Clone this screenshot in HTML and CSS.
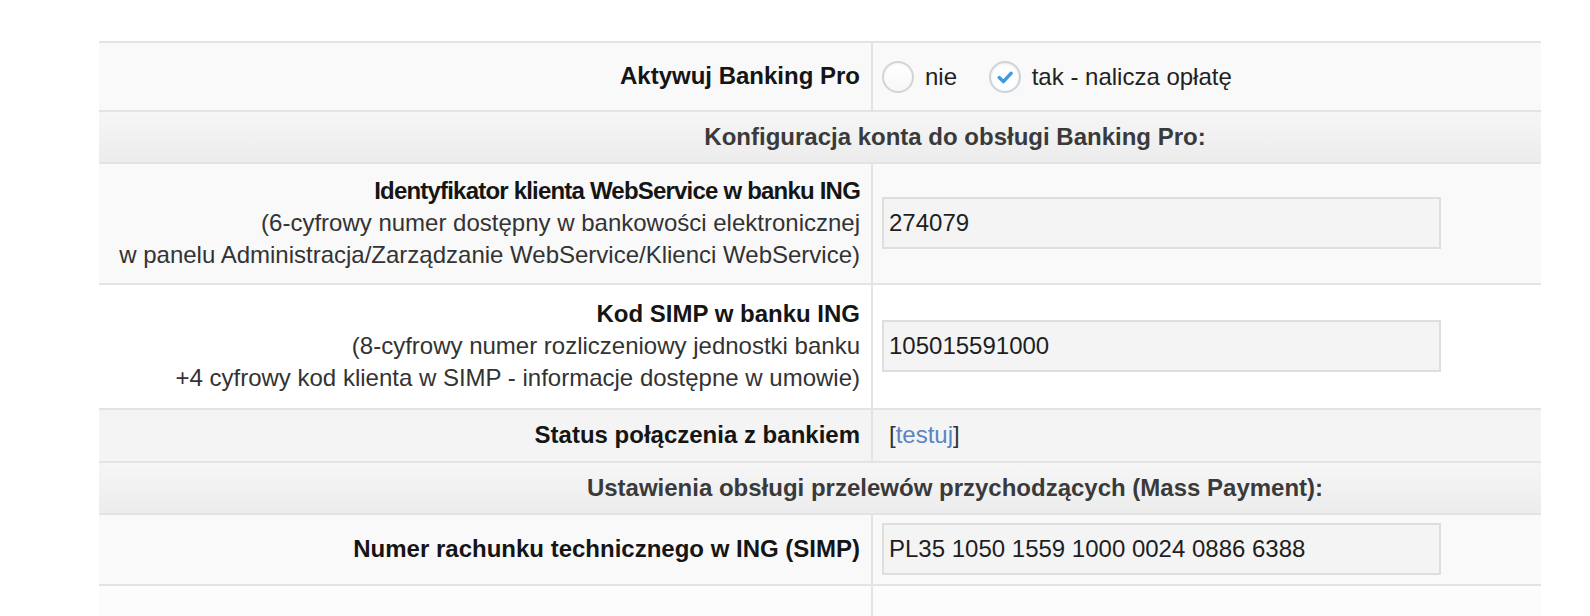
FILE: index.html
```html
<!DOCTYPE html>
<html>
	<head>
		<meta charset="utf-8">
		<link rel="stylesheet" href="styles.css">
	</head>
	<body>
		<div class="page">
			<table class="settings" border="0" cellspacing="0" cellpadding="0">
				<tr class="row-radio odd">
					<td class="label"><b>Aktywuj Banking Pro</b></td>
					<td class="value">
						<label class="choice first"><span class="radio"></span>nie</label>
						<label class="choice"><span class="radio checked"><svg width="28" height="28" viewBox="0 0 28 28"><path d="M8.2 14.6 L12.4 18.6 L20.2 10.2" fill="none" stroke="#3d9bd9" stroke-width="3.4" stroke-linecap="round" stroke-linejoin="round"/></svg></span>tak - nalicza opłatę</label>
					</td>
				</tr>
				<tr class="section">
					<td colspan="2">Konfiguracja konta do obsługi Banking Pro:</td>
				</tr>
				<tr class="row-ident odd">
					<td class="label">
						<b class="tight">Identyfikator klienta WebService w banku ING</b><br>
						(6-cyfrowy numer dostępny w bankowości elektronicznej<br>
						w panelu Administracja/Zarządzanie WebService/Klienci WebService)
					</td>
					<td class="value"><input type="text" class="input" value="274079"></td>
				</tr>
				<tr class="row-simp even">
					<td class="label">
						<b>Kod SIMP w banku ING</b><br>
						(8-cyfrowy numer rozliczeniowy jednostki banku<br>
						+4 cyfrowy kod klienta w SIMP - informacje dostępne w umowie)
					</td>
					<td class="value"><input type="text" class="input" value="105015591000"></td>
				</tr>
				<tr class="row-status hover">
					<td class="label"><b>Status połączenia z bankiem</b></td>
					<td class="value"><span class="test">[<a href="#">testuj</a>]</span></td>
				</tr>
				<tr class="section">
					<td colspan="2">Ustawienia obsługi przelewów przychodzących (Mass Payment):</td>
				</tr>
				<tr class="row-account odd">
					<td class="label"><b>Numer rachunku technicznego w ING (SIMP)</b></td>
					<td class="value"><input type="text" class="input" value="PL35 1050 1559 1000 0024 0886 6388"></td>
				</tr>
				<tr class="row-more even">
					<td class="label"></td>
					<td class="value"></td>
				</tr>
			</table>
		</div>
	</body>
</html>
```

FILE: styles.css
```css
body {
	margin: 0;
	background: #FFF;
	font-family: "Liberation Sans", Arial, sans-serif;
	font-size: 24px;
	line-height: 32px;
	color: #222;
	overflow: hidden;
}

.page {
	padding: 41px 0 0 99px;
}

.settings {
	width: 1442px;
	table-layout: fixed;
	border-collapse: separate;
	border-top: 2px solid #E3E3E3;
	font-size: 24px;
	line-height: 32px;
}

.settings td {
	box-sizing: border-box;
	border-bottom: 2px solid #E3E3E3;
	padding: 9px 9px 9px 9px;
	vertical-align: middle;
}

.settings td.label {
	width: 774px;
	text-align: right;
	padding-right: 11px;
	border-right: 2px solid #E3E3E3;
	color: #333;
}

.settings td.label b {
	color: #151515;
}

.settings td.label b.tight {
	letter-spacing: -0.8px;
}

.odd td {
	background: #F9F9F9;
}

.even td {
	background: #FFF;
}

.hover td {
	background: #F4F4F4;
}

.section td {
	background: linear-gradient(#F6F6F6, #ECECEC);
	text-align: center;
	font-weight: bold;
	color: #3A3A3A;
	padding: 9px 0 9px 270px;
}

.row-radio td {
	padding-top: 16px;
	padding-bottom: 17px;
}

.row-ident td.label {
	padding-top: 11px;
	padding-bottom: 12px;
}

.row-simp td.label {
	padding-top: 13px;
	padding-bottom: 14px;
}

.row-status td {
	padding-bottom: 10px;
}

.row-account td {
	padding-top: 8px;
}

.row-more td {
	height: 40px;
	padding: 0;
	background: #FCFCFC;
}

.choice {
	display: inline-flex;
	align-items: center;
	gap: 11px;
	vertical-align: middle;
	color: #222;
}

.choice.first {
	margin-right: 25px;
}

.radio {
	display: inline-flex;
	align-items: center;
	justify-content: center;
	box-sizing: border-box;
	width: 32px;
	height: 32px;
	border: 2px solid #D4D4D4;
	border-radius: 50%;
	background: linear-gradient(#FFF, #F7F7F7);
	box-shadow: inset 0 1px 2px rgba(0, 0, 0, 0.06);
}

.radio.checked {
	border-color: #CDD3D8;
	background: radial-gradient(circle, #FFF 55%, #EAF3FA 100%);
}

.input {
	display: block;
	box-sizing: border-box;
	width: 559px;
	height: 52px;
	margin: 0;
	padding: 0 5px;
	border: 2px solid #DEDEDE;
	background: #F4F4F4;
	font-family: "Liberation Sans", Arial, sans-serif;
	font-size: 24px;
	color: #1E1E1E;
	outline: none;
}

.test {
	margin-left: 7px;
	color: #333;
}

.test a {
	color: #5A85C2;
	text-decoration: none;
}
```
